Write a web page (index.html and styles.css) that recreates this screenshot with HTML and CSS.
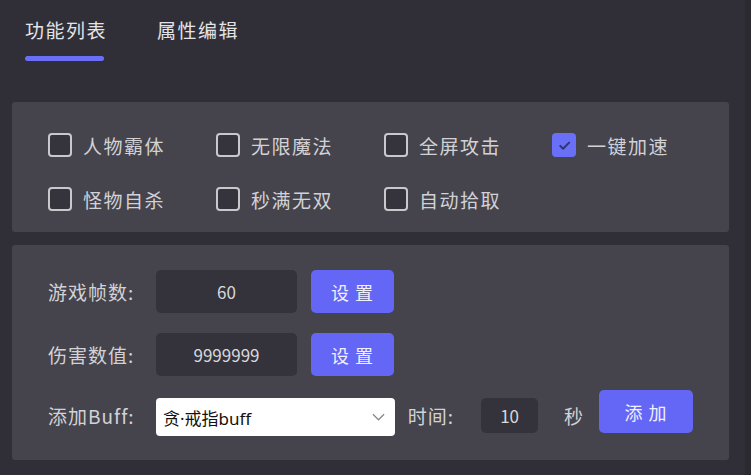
FILE: index.html
```html
<!DOCTYPE html>
<html lang="zh-CN">
<head>
    <meta charset="UTF-8">
    <meta name="viewport" content="width=device-width, initial-scale=1.0">
    <title>辅助面板</title>
    <link rel="stylesheet" href="styles.css">
</head>
<body>

<div class="shell">
    <div class="main">
        <div class="tabs">
            <div class="tab active">功能列表</div>
            <div class="tab">属性编辑</div>
        </div>

        <div class="panel switches">
            <label class="check"><span class="box"></span>人物霸体</label>
            <label class="check"><span class="box"></span>无限魔法</label>
            <label class="check"><span class="box"></span>全屏攻击</label>
            <label class="check"><span class="box on">
                <svg viewBox="0 0 24 24" width="17" height="17"><path d="M6 12.5l4 4L18.5 8" fill="none" stroke="#2d3672" stroke-width="2.8" stroke-linecap="round" stroke-linejoin="round"/></svg>
            </span>一键加速</label>
            <label class="check"><span class="box"></span>怪物自杀</label>
            <label class="check"><span class="box"></span>秒满无双</label>
            <label class="check"><span class="box"></span>自动拾取</label>
        </div>

        <div class="panel form">
            <div class="row">
                <span class="label">游戏帧数:</span>
                <div class="field">60</div>
                <button class="btn">设 置</button>
            </div>
            <div class="row">
                <span class="label">伤害数值:</span>
                <div class="field">9999999</div>
                <button class="btn">设 置</button>
            </div>
            <div class="row last">
                <span class="label">添加Buff:</span>
                <div class="select">
                    <span>贪·戒指buff</span>
                    <svg viewBox="0 0 14 8" width="13" height="8"><path d="M1 1l6 6 6-6" fill="none" stroke="#8a8a8a" stroke-width="1.4"/></svg>
                </div>
                <span class="label short">时间:</span>
                <div class="field small">10</div>
                <span class="label unit">秒</span>
                <button class="btn wide">添 加</button>
            </div>
        </div>
    </div>
    <div class="scroll"></div>
</div>

</body>
</html>
```

FILE: styles.css
```css
html, body { margin: 0; height: 100%; }
body {
    background-color: #302f37;
    font-family: "Noto Sans CJK SC", "Noto Sans", sans-serif;
    color: #d6d6da;
}
.shell { display: flex; height: 100%; }
.main { width: 717px; padding-left: 12px; }
.scroll { margin-left: auto; width: 6px; background-color: #2b2a31; }

.tabs { display: flex; gap: 50px; padding: 16px 0 0 13px; }
.tab {
    font-size: 19px;
    letter-spacing: 1.5px;
    line-height: 28px;
    white-space: nowrap;
    color: #e4e4e8;
}
.tab.active::after {
    content: "";
    display: block;
    width: 79px;
    height: 5px;
    margin-top: 12px;
    border-radius: 3px;
    background-color: #6a6ff8;
}

.panel { background-color: #45444d; border-radius: 3px; }

.switches {
    margin-top: 41px;
    padding: 31px 36px 21px;
    display: grid;
    grid-template-columns: repeat(4, 168px);
    row-gap: 30px;
}
.check {
    display: flex;
    align-items: center;
    gap: 11px;
    height: 24px;
    font-size: 19px;
    letter-spacing: 1.5px;
    color: #d2d2d6;
}
.box {
    box-sizing: border-box;
    width: 24px;
    height: 24px;
    border: 2px solid #c9c9cd;
    border-radius: 4px;
    background-color: #35343c;
    display: flex;
    align-items: center;
    justify-content: center;
}
.box.on { border-color: #6a6ff8; background-color: #6a6ff8; }

.form { margin-top: 13px; padding: 25px 36px 27px; }
.row { display: flex; align-items: center; gap: 14px; margin-bottom: 20px; }
.row.last { align-items: flex-end; margin-bottom: 0; margin-top: -6px; }
.label {
    width: 108px;
    margin-right: -14px;
    font-size: 19px;
    letter-spacing: 1px;
    line-height: 35px;
    white-space: nowrap;
    color: #d2d2d6;
}
.label.short { width: auto; margin: 0 13px 0 -1px; }
.label.unit { width: auto; margin: 0 1px 0 12px; }
.field {
    width: 141px;
    height: 43px;
    line-height: 43px;
    text-align: center;
    background-color: #34333b;
    border-radius: 5px;
    font-size: 17px;
    color: #d8d8dc;
}
.field.small { width: 57px; height: 35px; line-height: 35px; }
.btn {
    width: 83px;
    height: 43px;
    border: none;
    border-radius: 5px;
    background-color: #6466f6;
    color: #f0f0ff;
    font-family: inherit;
    font-size: 18px;
    letter-spacing: 1px;
}
.btn.wide { width: 94px; }
.select {
    box-sizing: border-box;
    width: 239px;
    height: 38px;
    margin-bottom: -3px;
    padding: 0 10px 0 7px;
    display: flex;
    align-items: center;
    justify-content: space-between;
    background-color: #ffffff;
    border-radius: 4px;
    color: #111;
    font-family: "Noto Sans", "Noto Sans CJK SC", sans-serif;
    font-size: 17px;
}
```
